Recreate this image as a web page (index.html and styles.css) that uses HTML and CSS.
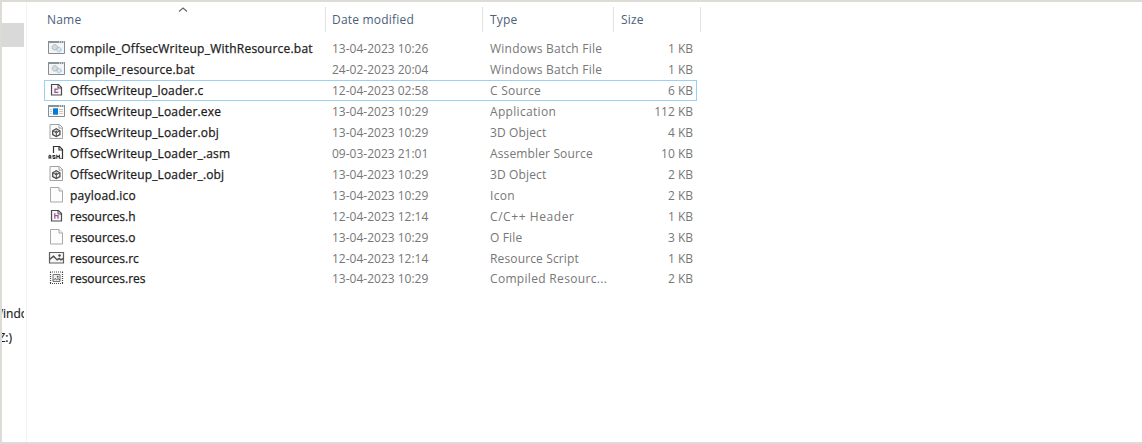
FILE: index.html
```html
<!DOCTYPE html>
<html lang="en">
<head>
<meta charset="utf-8">
<title>File list</title>
<link rel="stylesheet" href="styles.css">
</head>
<body>
<svg class="defs" aria-hidden="true">
  <symbol id="bat" viewBox="0 0 18 16">
    <path d="M.5 1.5h16v12H.5z" fill="#f3f4f5" stroke="#858c92"/>
    <path d="M0 1h17v2H0z" fill="#899199"/><path d="M11 2h1m1 0h1m1 0h1" stroke="#fff"/>
    <circle cx="6.8" cy="7.4" r="2.7" fill="#d5dadd" stroke="#a6adb2" stroke-dasharray="1.5 .6"/>
    <circle cx="11" cy="9.6" r="2.2" fill="#d4e8f4" stroke="#8ab6d0" stroke-dasharray="1.4 .6"/>
  </symbol>
  <symbol id="csrc" viewBox="0 0 18 16">
    <path d="M3.5 2.5h7L13.5 5.5v7.5h-10z" fill="#f7f5f7" stroke="#4c4c4c" stroke-width="1.2"/><path d="M10 2.7V6h3.3" fill="none" stroke="#4c4c4c"/>
    <path d="M10.3 7.1H7v3.3h3.3" fill="none" stroke="#9c5299" stroke-width="1.3"/>
  </symbol>
  <symbol id="head" viewBox="0 0 18 16">
    <path d="M3.5 2.5h7L13.5 5.5v7.5h-10z" fill="#f7f5f7" stroke="#4c4c4c" stroke-width="1.2"/><path d="M10 2.7V6h3.3" fill="none" stroke="#4c4c4c"/>
    <path d="M6.8 5.2v5.6M6.8 7.7H10v3.1" fill="none" stroke="#9c5299" stroke-width="1.2"/>
  </symbol>
  <symbol id="exe" viewBox="0 0 18 16">
    <path d="M.5 2.5h16v11H.5z" fill="#fafafa" stroke="#858c92"/><path d="M0 2h17v2H0z" fill="#899199"/><path d="M11 3h1m1 0h1m1 0h1" stroke="#fff"/>
    <path d="M5 5.3h5v6.4H5z" fill="#0879d0"/><path d="M11 6.5h4m-4 2h4m-4 2h4M2 6.5h2m-2 2h2m-2 2h2" stroke="#c6cacd"/>
  </symbol>
  <symbol id="obj" viewBox="0 0 18 16">
    <path d="M2 .5h9.5l3 3v11H2z" fill="#fafafa" stroke="#a2a2a2"/><path d="M11 .5v3.6h3.5" fill="none" stroke="#a2a2a2"/>
    <path d="M8.3 4.8l3.6 2v3.7l-3.6 2-3.6-2V6.800z" fill="#f5f5f5" stroke="#4c4c4c" stroke-width="1.3"/><path d="M4.700 6.800l3.600 2 3.600-2M8.300 8.800v3.700" fill="none" stroke="#4c4c4c"/><circle cx="8.300" cy="7.600" r="1.200" fill="#555"/>
  </symbol>
  <symbol id="asm" viewBox="0 0 18 16">
    <path d="M5.500 8V1.500h6L14.500 4.500V13.500h-1" fill="none" stroke="#333" stroke-width="1.200"/><path d="M11 1.500V5h3.500" fill="none" stroke="#333" stroke-width="1.200"/>
    <path d="M1 13.800v-2.800l.8-.7 1 .7v2.800M1 12.500h2M7.300 10.500H5v1.500h2v1.500H4.700M8.800 13.800v-3.300l1.300 1.300 1.300-1.300v3.300M12.300 13.400h1" fill="none" stroke="#333" stroke-width="1.100"/>
  </symbol>
  <symbol id="doc" viewBox="0 0 18 16">
    <path d="M2.500.5h8.500l3.500 3.500v11h-12z" fill="#fdfdfd" stroke="#a8a8a8"/><path d="M11 .5V4h3.500" fill="#f5f5f5" stroke="#a8a8a8"/>
  </symbol>
  <symbol id="rc" viewBox="0 0 18 16">
    <path d="M1.500 2.500h14v10.500h-14z" fill="#f7f7f7" stroke="#606060" stroke-width="1.200"/>
    <path d="M1.500 9.500l4-3.200 3.700 3.600 2-1.500 1.700 1.400 2.600-1.500" fill="none" stroke="#4c4c4c" stroke-width="1.400"/><circle cx="11.500" cy="5.500" r="1.200" fill="#444"/>
  </symbol>
  <symbol id="res" viewBox="0 0 18 16">
    <path d="M2 2h13M2 13.500h13" fill="none" stroke="#444" stroke-width="1.200" stroke-dasharray="1 1"/>
    <path d="M2.500 2v12M14.500 2v12" fill="none" stroke="#444" stroke-width="1.200" stroke-dasharray="1 1"/>
    <path d="M5 4.500h7v7H5z" fill="#eee" stroke="#777"/><path d="M5 10.500l2-2 1.500 1.200 1.500-1 2 1.300" fill="none" stroke="#555"/><circle cx="9.700" cy="6.700" r=".9" fill="#555"/>
  </symbol>
</svg>
<div class="window">
  <aside class="nav">
    <div class="nav-selected"></div>
    <div class="nav-item first"><span class="nav-windows">Windows</span></div>
    <div class="nav-item"><span class="nav-drive">(Z:)</span></div>
  </aside>
  <main class="files">
    <header class="head">
      <div class="col name">Name<svg class="sort" viewBox="0 0 10 5"><path d="M1 4.500l4-3.500 4 3.500" fill="none" stroke="#666" stroke-width="1.100"/></svg></div>
      <div class="col date">Date modified</div><div class="col type">Type</div><div class="col size">Size</div>
    </header>
    <div class="rows">
      <div class="row"><svg><use href="#bat"/></svg><b class="wide">compile_OffsecWriteup_WithResource.bat</b><time>13-04-2023 10:26</time><span class="wide">Windows Batch File</span><i>1 KB</i></div>
      <div class="row"><svg><use href="#bat"/></svg><b class="wide">compile_resource.bat</b><time>24-02-2023 20:04</time><span class="wide">Windows Batch File</span><i>1 KB</i></div>
      <div class="row selected"><svg><use href="#csrc"/></svg><b class="mid">OffsecWriteup_loader.c</b><time>12-04-2023 02:58</time><span class="wide">C Source</span><i>6 KB</i></div>
      <div class="row"><svg><use href="#exe"/></svg><b class="mid">OffsecWriteup_Loader.exe</b><time>13-04-2023 10:29</time><span class="wider">Application</span><i>112 KB</i></div>
      <div class="row"><svg><use href="#obj"/></svg><b class="mid">OffsecWriteup_Loader.obj</b><time>13-04-2023 10:29</time><span class="mid">3D Object</span><i>4 KB</i></div>
      <div class="row"><svg><use href="#asm"/></svg><b class="mid">OffsecWriteup_Loader_.asm</b><time>09-03-2023 21:01</time><span class="mid">Assembler Source</span><i>10 KB</i></div>
      <div class="row"><svg><use href="#obj"/></svg><b class="mid">OffsecWriteup_Loader_.obj</b><time>13-04-2023 10:29</time><span class="mid">3D Object</span><i>2 KB</i></div>
      <div class="row"><svg><use href="#doc"/></svg><b class="wide">payload.ico</b><time>13-04-2023 10:29</time><span class="wider">Icon</span><i>2 KB</i></div>
      <div class="row"><svg><use href="#head"/></svg><b>resources.h</b><time>12-04-2023 12:14</time><span class="widest">C/C++ Header</span><i>1 KB</i></div>
      <div class="row"><svg><use href="#doc"/></svg><b>resources.o</b><time>13-04-2023 10:29</time><span class="mid">O File</span><i>3 KB</i></div>
      <div class="row"><svg><use href="#rc"/></svg><b>resources.rc</b><time>12-04-2023 12:14</time><span class="mid">Resource Script</span><i>1 KB</i></div>
      <div class="row"><svg><use href="#res"/></svg><b>resources.res</b><time>13-04-2023 10:29</time><span class="wider">Compiled Resourc...</span><i>2 KB</i></div>
    </div>
  </main>
</div>
</body>
</html>
```
FILE: styles.css
```css
* { box-sizing: border-box; }
body { margin: 0; font: 12px/20px "Open Sans", "Noto Sans", sans-serif; color: #1c1c1c; background: #dedbd7; }
.defs { display: none; }
.window { display: flex; height: 444px; border: 2px solid #dedbd7; border-right: 0; }
.nav { width: 22px; background: #fff; overflow: hidden; padding-top: 21px; }
.nav-selected { height: 24px; background: #d9d9d9; }
.nav-item { display: flex; justify-content: flex-end; height: 24px; white-space: nowrap; -webkit-text-stroke: .2px; }
.nav-item.first { margin-top: 257px; }
.nav-windows { margin-right: -19px; }
.nav-drive { margin-right: 12px; }
.files { flex: 1; background: #fff; border-left: 2px solid #fff; padding-left: 18px; box-shadow: inset 1px 0 #f2f2f2; }
.head { display: flex; height: 30px; padding-top: 5px; color: #4c607a; letter-spacing: .2px; }
.col { height: 25px; line-height: 25px; border-right: 1px solid #e2e2e2; padding-left: 7px; }
.name { width: 282px; padding-left: 3px; position: relative; }
.date { width: 157px; padding-left: 6px; }
.type { width: 131px; }
.size { width: 87px; }
.sort { position: absolute; left: 134px; top: 0; width: 10px; height: 5px; }
.rows { padding-top: 6px; }
.row { display: grid; grid-template-columns: 22px 262px 158px 130px 73px; align-items: center; width: 653px; height: 20.92px; padding-left: 4px; color: #777; white-space: nowrap; line-height: 18px; }
.row svg { width: 18px; height: 16px; }
.row b, .row time, .row span, .row i { padding-top: 2px; }
.row b { font-weight: 400; color: #1c1c1c; -webkit-text-stroke: .25px; }
.row i { font-style: normal; text-align: right; }
.selected { box-shadow: inset 0 0 0 1px #99d1f5; }
.row .mid { letter-spacing: .14px; }
.row .wide { letter-spacing: .23px; }
.row .wider { letter-spacing: .32px; }
.row .widest { letter-spacing: .58px; }
```
